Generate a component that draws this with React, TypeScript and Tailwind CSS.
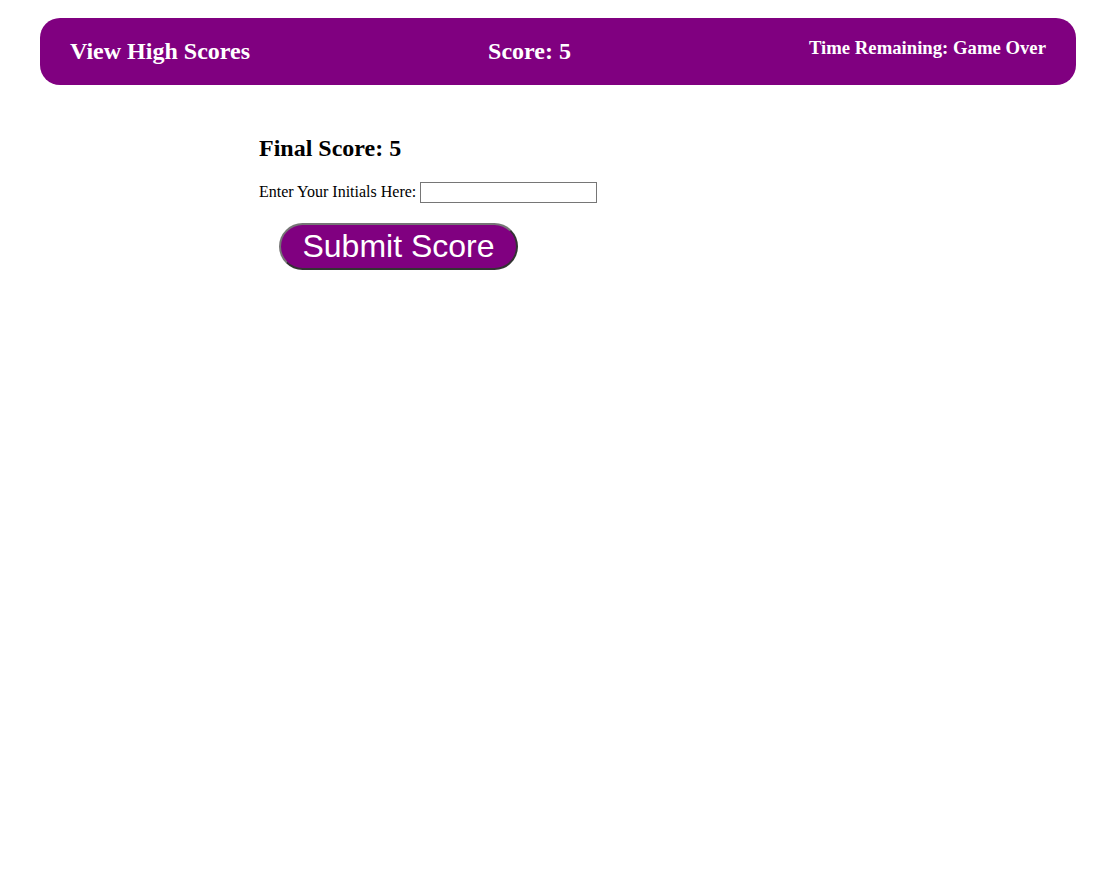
const App = () => {
  return (
    <div className="min-h-screen bg-white text-black" style={{ fontFamily: '"Liberation Serif", "Times New Roman", serif' }}>
      <header className="ml-10 mr-[42px] mt-[18px] flex h-[67px] items-center justify-between rounded-[20px] bg-[#800080] px-[30px] text-white">
        <a href="#" className="-mt-[2px] text-[24px] font-bold">View High Scores</a>
        <div className="-mt-[2px] text-[24px] font-bold">Score: 5</div>
        <div className="-mt-[7px] text-[18.72px] font-bold">Time Remaining: Game Over</div>
      </header>

      <main className="mx-auto mt-[45px] w-[600px]">
        <h2 className="text-[24px] font-bold">Final Score: 5</h2>
        <div className="mt-[14px] flex items-center text-[16px]">
          <label htmlFor="initials">Enter Your Initials Here:</label>
          <input
            id="initials"
            type="text"
            className="ml-1 h-[21px] w-[177px] border border-[#767676] bg-white px-1"
          />
        </div>
        <button
          className="ml-5 mt-[19px] h-[47px] w-[239px] rounded-full border-2 border-t-[#767676] border-l-[#767676] border-b-[#333] border-r-[#333] bg-[#800080] pb-[2px] text-[32px] leading-none text-white"
          style={{ fontFamily: '"Liberation Sans", Arial, sans-serif' }}
        >
          Submit Score
        </button>
      </main>
    </div>
  );
};

export default App;
